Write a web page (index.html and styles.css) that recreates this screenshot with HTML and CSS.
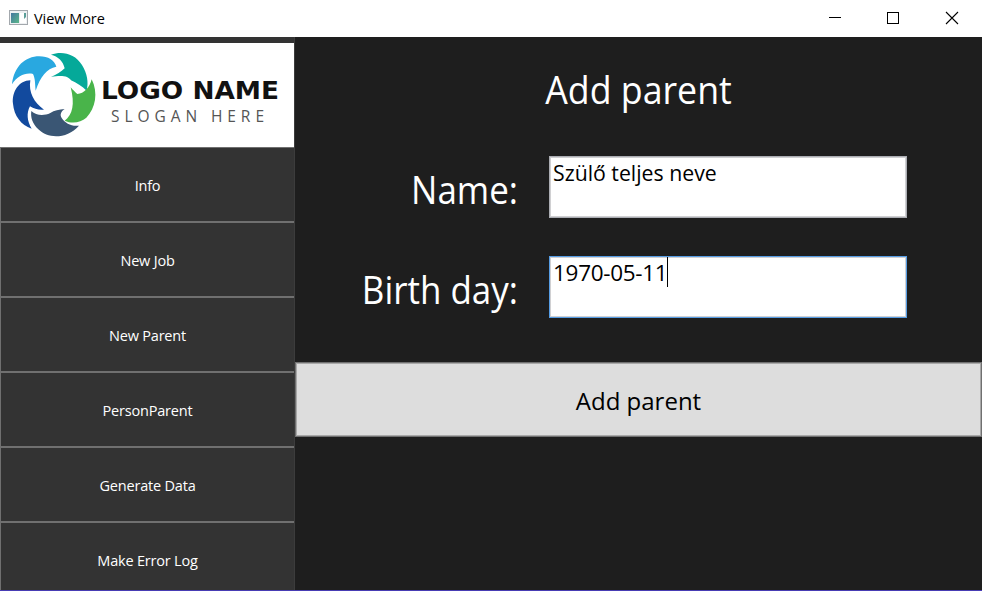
FILE: index.html
```html
<!DOCTYPE html>
<html lang="en">
<head>
<meta charset="utf-8">
<title>View More</title>
<link rel="stylesheet" href="styles.css">
</head>
<body>
<div class="window">
  <header class="titlebar">
    <svg class="app-icon" width="19" height="16" viewBox="0 0 19 16">
      <defs><linearGradient id="pane" x1="0" y1="0" x2="1" y2="1"><stop offset="0" stop-color="#4577a0"/><stop offset="1" stop-color="#5bb88a"/></linearGradient></defs>
      <rect x=".5" y=".5" width="18" height="14" fill="#eef0f2" stroke="#a3a8ad"/>
      <rect x="2" y="3" width="8" height="10" fill="url(#pane)"/>
      <rect x="11" y="3" width="6" height="10" fill="#fff"/>
      <path d="M15 3h2v4l-2 2z" fill="#5b9e98"/>
    </svg>
    <span class="title">View More</span>
    <div class="controls">
      <svg width="58" height="37" viewBox="0 0 58 37"><path d="M17 17.5h12" stroke="#000"/></svg>
      <svg width="58" height="37" viewBox="0 0 58 37"><rect x="17.500" y="12.500" width="11" height="11" fill="none" stroke="#000"/></svg>
      <svg width="58" height="37" viewBox="0 0 58 37"><path d="M18 12l12 12M30 12L18 24" stroke="#000" stroke-width="1.1"/></svg>
    </div>
  </header>
  <div class="body">
    <nav class="sidebar">
      <svg class="logo" width="294" height="104" viewBox="0 0 294 104">
        <g transform="scale(.33333) translate(0 -15)">
          <path fill="#29a8e0" d="M36 139C42 86 75 55 118 55C145 55 163 66 169 86C140 91 121 116 107 158C105 138 106 122 99 108C76 103 52 114 36 139Z"/>
          <path fill="#05a999" d="M153 50C187 38 225 47 246 81C262 106 266 134 260 158C247 146 229 134 213 127C205 115 187 111 153 117C170 110 183 101 194 91C190 70 174 55 153 50Z"/>
          <path fill="#49b44a" d="M275 124C295 164 287 211 259 239C242 254 216 258 194 248C218 231 225 198 212 148C219 156 225 162 232 168C252 167 269 149 275 124Z"/>
          <path fill="#3a5674" d="M94 219C108 232 130 235 151 225C163 217 177 214 194 213C182 221 179 231 185 240C196 256 214 266 237 263C201 303 145 304 115 274C98 258 91 238 94 219Z"/>
          <path fill="#124a9e" d="M91 127C57 127 35 162 39 197C42 233 63 261 95 272C81 249 79 225 90 205C103 213 117 217 132 215C102 194 85 163 91 127Z"/>
        </g>
        <text class="logo-name" x="101" y="56" textLength="178" lengthAdjust="spacingAndGlyphs">LOGO NAME</text>
        <text class="logo-slogan" x="111" y="78.500" textLength="153">SLOGAN HERE</text>
      </svg>
      <button class="nav-item">Info</button>
      <button class="nav-item">New Job</button>
      <button class="nav-item">New Parent</button>
      <button class="nav-item">PersonParent</button>
      <button class="nav-item">Generate Data</button>
      <button class="nav-item">Make Error Log</button>
    </nav>
    <main class="content">
      <h1>Add parent</h1>
      <div class="row">
        <span class="label">Name:</span>
        <div class="field"><span class="name-value">Szülő teljes neve</span></div>
      </div>
      <div class="row">
        <span class="label">Birth day:</span>
        <div class="field focused"><span class="date-value">1970-05-11</span><i class="caret"></i></div>
      </div>
      <button class="submit"><span>Add parent</span></button>
    </main>
  </div>
</div>
</body>
</html>
```

FILE: styles.css
```css
* { box-sizing: border-box; }
body {
  margin: 0;
  overflow: hidden;
  font-family: "Open Sans", "Noto Sans", sans-serif;
}
.window {
  width: 982px;
  height: 591px;
  display: flex;
  flex-direction: column;
  background: #1e1e1e;
  border-bottom: 1px solid #483cb4;
  overflow: hidden;
}
.titlebar {
  height: 37px;
  flex: none;
  display: flex;
  align-items: center;
  padding-left: 9px;
  background: #fff;
}
.app-icon { margin-bottom: 1px; }
.title {
  margin-left: 6px;
  font-size: 14.5px;
  letter-spacing: -0.05px;
  color: #000;
}
.controls { display: flex; margin-left: auto; margin-right: -4px; }
.controls svg { display: block; flex: none; }
.body { flex: 1; min-height: 0; display: flex; }
.sidebar {
  width: 295px;
  flex: none;
  padding-top: 6px;
  background: #333;
  border-right: 1px solid #3c3c3c;
  display: flex;
  flex-direction: column;
  overflow: hidden;
}
.logo { display: block; flex: none; background: #fff; }
.logo-name { font: bold 25px "DejaVu Sans", sans-serif; fill: #111; }
.logo-slogan { font: 15.5px "Open Sans", sans-serif; fill: #555; }
.nav-item {
  height: 75px;
  flex: none;
  padding: 2px 0 0;
  border: 1px solid #707070;
  border-right: 0;
  background: #333;
  color: #fff;
  font: 14.5px "Open Sans", sans-serif;
  letter-spacing: -0.2px;
}
.content {
  flex: 1;
  display: flex;
  flex-direction: column;
}
h1 {
  margin: 0;
  height: 119px;
  padding-top: 25px;
  font-size: 38px;
  line-height: 54px;
  font-weight: 400;
  text-align: center;
  color: #fff;
  transform: scaleX(.94);
}
.row { display: flex; height: 62px; margin-bottom: 38px; }
.label {
  width: 222px;
  margin-right: 32px;
  font-size: 38px;
  line-height: 66px;
  text-align: right;
  white-space: nowrap;
  color: #fff;
  transform: translateX(1px) scaleX(.92);
  transform-origin: right;
}
.field {
  width: 358px;
  display: flex;
  align-items: flex-start;
  padding: 0 3px;
  border: 1px solid #abadb3;
  box-shadow: inset 0 0 0 1px #d0d0d2;
  background: #fff;
  font-size: 22.5px;
  line-height: 31px;
  white-space: nowrap;
  color: #000;
}
.name-value { transform: scaleX(.945); transform-origin: left; }
.date-value { letter-spacing: -0.3px; }
.focused { border-color: #569de5; }
.caret { width: 1px; height: 30px; background: #000; }
.submit {
  height: 75px;
  margin-top: 6px;
  padding: 1px 0 0;
  border: 1px solid #707070;
  box-shadow: inset 0 0 0 1px #a8a8a8;
  background: #ddd;
  color: #000;
  font: 24px "Open Sans", sans-serif;
}
```
